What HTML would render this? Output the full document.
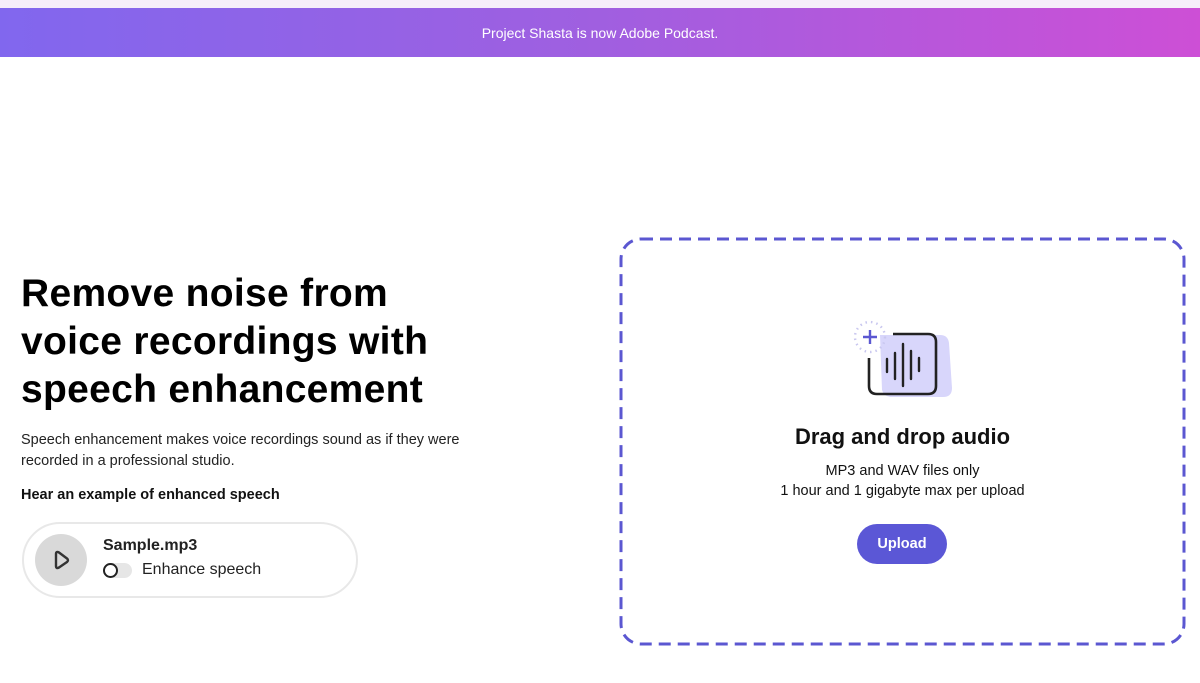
<!DOCTYPE html>
<html><head><style>
body{margin:0;width:1200px;height:683px;background:#fff;font-family:"Liberation Sans",sans-serif;position:relative;overflow:hidden}
.top{position:absolute;left:0;top:0;width:1200px;height:8px;background:#f6eefa}
.ban{position:absolute;left:0;top:8px;width:1200px;height:49px;background:linear-gradient(90deg,#8167ee,#a05fe0 50%,#cd4fd6);color:#fff;font-size:14px;text-align:center;line-height:51px}
h1{position:absolute;left:21px;top:270px;margin:0;font-size:39px;line-height:48px;font-weight:bold;color:#000;letter-spacing:0.3px}
.p{position:absolute;left:21px;top:430px;font-size:14.5px;line-height:21px;color:#222}
.h{position:absolute;left:21px;top:487px;font-size:14.5px;font-weight:bold;color:#111}
.card{position:absolute;left:22px;top:522px;width:332px;height:72px;border:2px solid #e8e8e8;border-radius:40px}
.play{position:absolute;left:11px;top:10px;width:52px;height:52px;border-radius:50%;background:#d9d9d9}
.nm{position:absolute;left:79px;top:13px;font-weight:bold;font-size:16px;color:#222}
.tg{position:absolute;left:79px;top:39px;width:29px;height:15px;border-radius:8px;background:#e6e6e6}
.tg i{position:absolute;left:0;top:0;width:11px;height:11px;border:2px solid #222;border-radius:50%;background:#fff}
.en{position:absolute;left:118px;top:37px;font-size:16px;color:#222}
.t{position:absolute;left:620px;width:565px;text-align:center;color:#111}
.btn{position:absolute;left:857px;top:524px;width:90px;height:40px;border-radius:20px;background:#5b57d6;color:#fff;font-weight:bold;font-size:14.5px;text-align:center;line-height:41px}
</style></head><body>
<div class="top"></div>
<div class="ban">Project Shasta is now Adobe Podcast.</div>
<h1>Remove noise from<br>voice recordings with<br>speech enhancement</h1>
<div class="p">Speech enhancement makes voice recordings sound as if they were<br>recorded in a professional studio.</div>
<div class="h">Hear an example of enhanced speech</div>
<div class="card"><div class="play"><svg width="52" height="52"><path d="M21 20 L21 32 Q21 35 24 33.5 L32 28 Q34 26 32 24.5 L24 18.5 Q21 17 21 20Z" fill="none" stroke="#333" stroke-width="2.4" stroke-linejoin="round"/></svg></div>
<div class="nm">Sample.mp3</div><div class="tg"><i></i></div><div class="en">Enhance speech</div></div>
<svg style="position:absolute;left:619px;top:237px" width="568" height="410"><rect x="2" y="2" width="563" height="405" rx="20" fill="none" stroke="#5b57d1" stroke-width="3" stroke-dasharray="12 7"/></svg>
<svg style="position:absolute;left:840px;top:310px" width="120" height="100">
<path d="M40 25 H100 Q108 25 109 33 L112 78 Q112 87 103 87 H52 Q44 87 42 80Z" fill="#d8d6fb"/>
<circle cx="30" cy="27" r="15" fill="none" stroke="#c9c7ef" stroke-width="2.4" stroke-dasharray="1.5 4"/>
<path d="M30 20v14M23 27h14" stroke="#5b57d1" stroke-width="2.4"/>
<path d="M53 24 H88 Q96 24 96 32 V76 Q96 84 88 84 H37 Q29 84 29 76 V48" fill="none" stroke="#222" stroke-width="2.6"/>
<path d="M47 49v13M55 43v26M63 34v42M71 41v28M79 48v13" stroke="#222" stroke-width="2.4" stroke-linecap="round"/>
</svg>
<div class="t" style="top:424px;font-size:22px;font-weight:bold">Drag and drop audio</div>
<div class="t" style="top:461px;font-size:14.5px;line-height:20px">MP3 and WAV files only<br>1 hour and 1 gigabyte max per upload</div>
<div class="btn">Upload</div>
</body></html>
